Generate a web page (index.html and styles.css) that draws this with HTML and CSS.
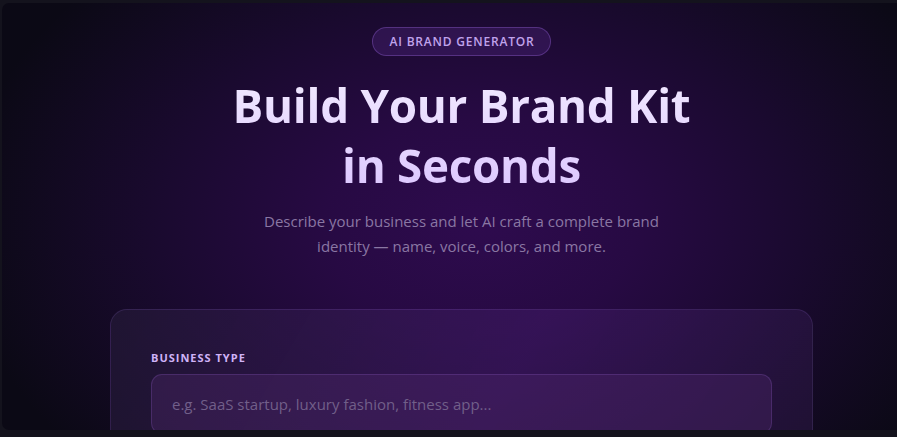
FILE: index.html
```html
<!DOCTYPE html>
<html lang="en">
<head>
<meta charset="utf-8">
<title>AI Brand Generator</title>
<link rel="stylesheet" href="styles.css">
</head>
<body>
<main class="app">
  <section class="hero">
    <span class="badge">AI BRAND GENERATOR</span>
    <h1 class="title">Build Your Brand Kit<br>in Seconds</h1>
    <p class="subtitle">Describe your business and let AI craft a complete brand identity — name, voice, colors, and more.</p>
  </section>
  <section class="card">
    <label class="field-label" for="biz">BUSINESS TYPE</label>
    <input class="field-input" id="biz" type="text" placeholder="e.g. SaaS startup, luxury fashion, fitness app...">
  </section>
</main>
</body>
</html>
```
FILE: styles.css
```css
html, body {
  margin: 0;
  padding: 0;
  height: 100%;
  overflow: hidden;
  background: #14131d;
}
body {
  padding: 3px 0 0 2px;
  box-sizing: border-box;
  font-family: "Open Sans", "Noto Sans", sans-serif;
}
.app {
  width: 919px;
  height: 427px;
  border-radius: 7px;
  overflow: hidden;
  background:
    radial-gradient(ellipse 520px 360px at 52% 52%, #2e0b4e 0%, #270a43 30%, #1a0a2f 62%, #0b0915 100%),
    #0b0915;
  display: flex;
  flex-direction: column;
  align-items: center;
  box-sizing: border-box;
  padding-top: 24px;
}
.hero {
  display: flex;
  flex-direction: column;
  align-items: center;
  text-align: center;
}
.badge {
  display: inline-block;
  padding: 7px 16px 6px 17px;
  border-radius: 999px;
  border: 1px solid rgba(160, 110, 230, 0.33);
  background: rgba(120, 60, 190, 0.2);
  color: #c0a3ec;
  font-size: 12px;
  font-weight: 600;
  letter-spacing: 0.8px;
  line-height: 14px;
}
.title {
  margin: 19px 0 0;
  font-size: 45.8px;
  line-height: 60px;
  font-weight: 700;
  letter-spacing: -0.3px;
  color: #e9dcff;
  background: linear-gradient(180deg, #f1e9ff 0%, #dcc6ff 100%);
  -webkit-background-clip: text;
  background-clip: text;
  -webkit-text-fill-color: transparent;
}
.subtitle {
  margin: 14px 0 0;
  width: 430px;
  font-size: 15px;
  line-height: 25px;
  color: #8a77a3;
}
.card {
  margin-top: 50px;
  width: 703px;
  box-sizing: border-box;
  padding: 41px 40px 40px;
  border-radius: 17px;
  border: 1px solid rgba(150, 110, 210, 0.16);
  background: linear-gradient(120deg, rgba(40, 30, 60, 0.55) 0%, rgba(70, 30, 110, 0.45) 55%, rgba(45, 25, 70, 0.5) 100%);
  display: flex;
  flex-direction: column;
}
.field-label {
  font-size: 11px;
  font-weight: 700;
  letter-spacing: 1px;
  color: #cfb3f7;
  line-height: 14px;
}
.field-input {
  margin-top: 9px;
  height: 60px;
  box-sizing: border-box;
  padding: 0 20px;
  border-radius: 11px;
  border: 1px solid rgba(160, 110, 220, 0.22);
  background: rgba(80, 40, 110, 0.35);
  font-family: "Open Sans", "Noto Sans", sans-serif;
  font-size: 15px;
  color: #e8dcff;
  outline: none;
}
.field-input::placeholder {
  color: #715f89;
}
```
